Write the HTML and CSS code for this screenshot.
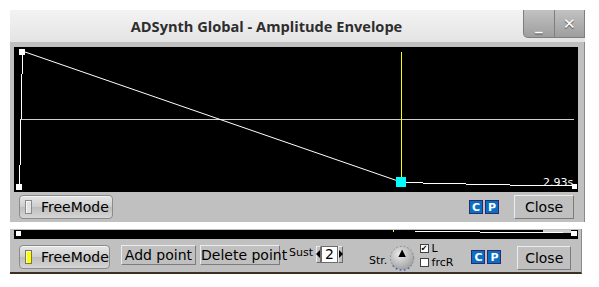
FILE: index.html
```html
<!DOCTYPE html>
<html lang="en">
<head>
<meta charset="UTF-8" />
<title>ADSynth Global - Amplitude Envelope</title>
<link rel="stylesheet" href="styles.css">
</head>
<body>

<div class="window main-win">
<div class="titlebar">
<div class="title">ADSynth Global - Amplitude Envelope</div>
<div class="wm-buttons">
<span class="wm-btn wm-min">_</span>
<span class="wm-btn wm-close">&#x2715;</span>
</div>
</div>

<div class="win-body">
<svg class="env-graph" width="564" height="145" shape-rendering="crispEdges">
<rect x="0" y="0" width="564" height="145" fill="#000"/>
<line x1="7" y1="72.5" x2="560" y2="72.5" stroke="#cfcfcf"/>
<path d="M8.5 8 V27 M7.5 27 V72 M6.5 72 V118 M5.5 118 V138" stroke="#fff" fill="none"/>
<line x1="11" y1="5" x2="384" y2="134" stroke="#fff" shape-rendering="auto"/>
<line x1="387.5" y1="5" x2="387.5" y2="130" stroke="#ffff00"/>
<path d="M392 135.5 H409 M409 136.5 H452 M452 137.5 H496 M496 138.5 H558" stroke="#fff"/>
<text x="529" y="139" class="time-txt">2.93s</text>
<rect x="5" y="2" width="6" height="6" fill="#fff"/>
<rect x="2" y="137" width="6" height="6" fill="#fff"/>
<rect x="382" y="130" width="10" height="10" fill="#00ffff"/>
<rect x="558" y="137" width="5" height="5" fill="#fff"/>
</svg>

<div class="ctl-row">
<button class="fl-btn free-btn"><span class="light"></span>FreeMode</button>
<div class="spacer"></div>
<div class="cp">
<span class="cp-btn">C</span>
<span class="cp-btn">P</span>
</div>
<button class="flat-btn close-btn">Close</button>
</div>
</div>
</div>

<div class="window sub-win">
<div class="win-body">
<svg class="env-strip" width="564" height="9" shape-rendering="crispEdges">
<rect x="0" y="0" width="564" height="9" fill="#000"/>
<rect x="2" y="1" width="5" height="5" fill="#fff"/>
<rect x="379" y="0" width="1" height="2" fill="#ffff00"/>
<path d="M401 1.5 H466 M466 2.5 H549" stroke="#fff"/>
<rect x="529" y="0" width="28" height="3" fill="#fff" opacity="0.8"/>
<rect x="557" y="1" width="6" height="5" fill="#fff"/>
</svg>

<div class="ctl-row sub-row">
<button class="fl-btn free-btn"><span class="light on"></span>FreeMode</button>
<button class="flat-btn small-btn add-btn">Add point</button>
<button class="flat-btn small-btn del-btn">Delete point</button>
<span class="sust-lbl">Sust</span>
<div class="counter">
<span class="arrow left"></span>
<span class="count-val">2</span>
<span class="arrow right"></span>
</div>
<span class="str-lbl">Str.</span>
<svg class="knob" width="28" height="28" viewBox="0 0 28 28">
<defs>
<radialGradient id="kg" cx="0.4" cy="0.35" r="0.7">
<stop offset="0" stop-color="#ececec"/>
<stop offset="1" stop-color="#9c9c9c"/>
</radialGradient>
</defs>
<circle cx="14" cy="14" r="12.5" fill="url(#kg)" stroke="#8a8a8a" stroke-dasharray="2 2"/>
<path d="M4 22 A12.5 12.5 0 0 0 24 22" fill="none" stroke="#3a5fcd" stroke-width="1.5" stroke-dasharray="1.5 3"/>
<polygon points="14,5 10,13 18,13" fill="#000"/>
</svg>
<div class="checks">
<label class="chk"><span class="box checked">&#x2714;</span>L</label>
<label class="chk"><span class="box"></span>frcR</label>
</div>
<div class="cp sub-cp">
<span class="cp-btn">C</span>
<span class="cp-btn">P</span>
</div>
<button class="flat-btn close-btn sub-close">Close</button>
</div>
</div>
</div>

</body>
</html>
```

FILE: styles.css
```css
* {
box-sizing: border-box;
}

body {
margin: 0;
background: #ffffff;
font-family: "DejaVu Sans", sans-serif;
}

.window {
margin-left: 10px;
}

.main-win {
margin-top: 10px;
width: 575px;
}

.sub-win {
margin-top: 7px;
width: 572px;
}

.titlebar {
height: 32px;
display: flex;
background: linear-gradient(#f3f3f3, #e4e4e4);
}

.title {
flex: 1;
text-align: center;
font-family: "Open Sans", sans-serif;
font-weight: 700;
font-size: 14.6px;
line-height: 32px;
color: #2e2e2e;
}

.wm-buttons {
display: flex;
align-self: flex-start;
width: 62px;
height: 28px;
border: 1px solid #7e7e7e;
border-top: none;
border-radius: 0 0 0 5px;
background-color: #b4b4b4;
background-image: linear-gradient(#c2c2c2, #9e9e9e);
overflow: hidden;
}

.wm-btn {
flex: 1;
display: flex;
align-items: center;
justify-content: center;
color: #ffffff;
font-family: "DejaVu Sans", sans-serif;
font-weight: 700;
font-size: 15px;
text-shadow: 0 1px 1px #4a4a4a;
}

.wm-min {
border-right: 1px solid #7e7e7e;
padding-top: 2px;
}

.win-body {
background: #c0c0c0;
padding: 5px 5px 0 4px;
border-right: 1px solid #8a8a8a;
}

.sub-win .win-body {
padding-top: 1px;
border-bottom: 2px solid #3c3022;
}

.env-graph,
.env-strip {
display: block;
}

.time-txt {
fill: #ffffff;
font-family: "DejaVu Sans", sans-serif;
font-size: 11px;
}

.ctl-row {
display: flex;
align-items: center;
height: 30px;
padding-left: 5px;
}

.sub-row {
height: 33px;
padding-top: 3px;
}

.spacer {
flex: 1;
}

.fl-btn {
display: flex;
align-items: center;
height: 24px;
width: 94px;
padding: 0 0 0 5px;
border: 1px solid #8c8c8c;
border-radius: 4px;
background: linear-gradient(#e6e6e6, #cdcdcd 50%, #bdbdbd 52%, #d6d6d6);
box-shadow: inset 0 1px 0 #f4f4f4;
font-family: "DejaVu Sans", sans-serif;
font-size: 14px;
color: #000;
}

.light {
display: inline-block;
width: 7px;
height: 14px;
margin-right: 9px;
border: 1px solid #8a8a8a;
background: #e2e2e2;
box-shadow: inset 1px 1px 0 #f6f6f6;
}

.light.on {
background: #ffff00;
border-color: #7a7a40;
}

.flat-btn {
height: 24px;
padding: 0;
background: #c0c0c0;
border: 1px solid;
border-color: #ececec #7c7c7c #7c7c7c #ececec;
font-family: "DejaVu Sans", sans-serif;
font-size: 14px;
color: #000;
}

.close-btn {
width: 60px;
margin-left: 15px;
margin-right: 5px;
}

.cp {
display: flex;
gap: 2px;
}

.cp-btn {
width: 14px;
height: 14px;
display: flex;
align-items: center;
justify-content: center;
background: #0a6fc4;
border: 1px solid #2b2b6b;
color: #ffffff;
font-weight: 700;
font-size: 11px;
}

.small-btn {
height: 20px;
align-self: flex-start;
margin-top: 3px;
}

.add-btn {
width: 80px;
margin-left: 11px;
}

.del-btn {
width: 80px;
margin-left: 4px;
text-align: left;
padding-left: 0;
white-space: nowrap;
overflow: visible;
}

.sust-lbl {
font-size: 11px;
margin-left: 9px;
margin-top: -9px;
}

.counter {
display: flex;
align-items: center;
margin-left: 3px;
margin-top: -5px;
height: 17px;
}

.arrow {
width: 5px;
height: 17px;
background: #c0c0c0;
border: 1px solid;
border-color: #ececec #6c6c6c #6c6c6c #ececec;
position: relative;
}

.arrow::after {
content: "";
position: absolute;
top: 3px;
border-top: 4px solid transparent;
border-bottom: 4px solid transparent;
}

.arrow.left::after {
left: -1px;
border-right: 4px solid #000;
}

.arrow.right::after {
left: 0;
border-left: 4px solid #000;
}

.count-val {
width: 17px;
height: 17px;
background: #ffffff;
border: 1px solid #6c6c6c;
font-size: 14px;
line-height: 15px;
text-align: center;
}

.str-lbl {
font-size: 11px;
margin-left: 26px;
margin-top: 6px;
}

.knob {
margin-left: 2px;
margin-top: 2px;
}

.checks {
display: flex;
flex-direction: column;
gap: 2px;
margin-left: 4px;
margin-top: -4px;
font-size: 11px;
}

.chk {
display: flex;
align-items: center;
height: 12px;
}

.box {
width: 9px;
height: 9px;
margin-right: 3px;
background: #ffffff;
border: 1px solid #404040;
font-size: 8px;
line-height: 7px;
text-align: center;
}

.sub-cp {
margin-left: 18px;
}

.sub-close {
margin-left: 16px;
width: 57px;
margin-top: 2px;
}
```
